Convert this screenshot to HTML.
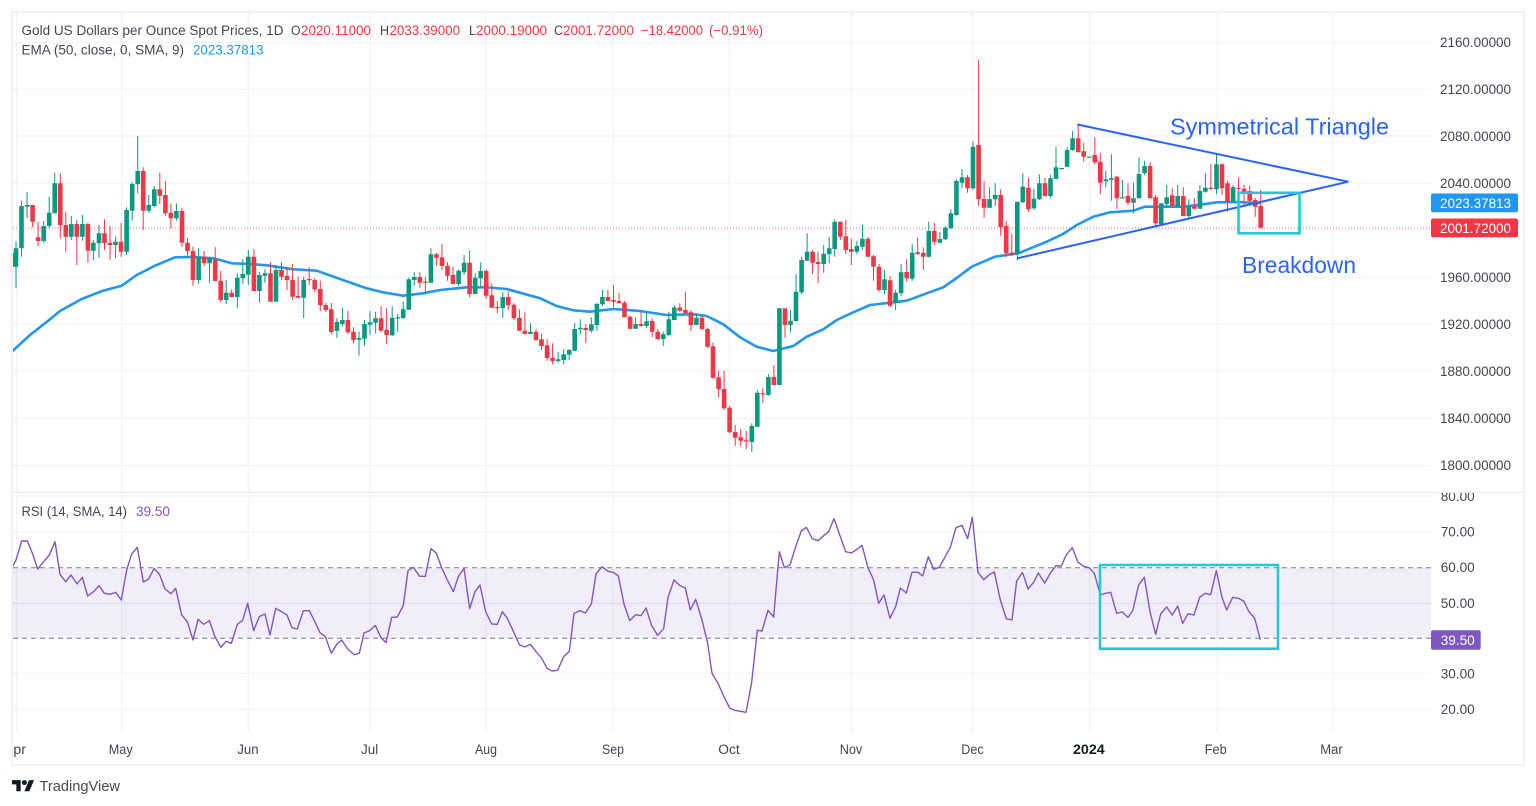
<!DOCTYPE html>
<html lang="en">
<head>
<meta charset="utf-8">
<title>Gold US Dollars per Ounce Spot Prices</title>
<style>
html,body{margin:0;padding:0;background:#fff;width:1536px;height:806px;overflow:hidden}
svg{display:block;font-family:"Liberation Sans",sans-serif}
text{font-size:13.5px;fill:#434651}
</style>
</head>
<body>
<svg width="1536" height="806" viewBox="0 0 1536 806" xmlns="http://www.w3.org/2000/svg">
<defs>
<clipPath id="c1"><rect x="13" y="13" width="1510" height="479"/></clipPath>
<clipPath id="c2"><rect x="13" y="493" width="1510" height="272"/></clipPath>
</defs>
<rect width="1536" height="806" fill="#fff"/>
<path fill="none" stroke="#f1f2f6" stroke-width="1.2" d="M13 42.7H1431M13 89.3H1431M13 136H1431M13 183H1431M13 230H1431M13 277H1431M13 324.3H1431M13 371H1431M13 418.3H1431M13 465.5H1431M13 496H1431M13 531.7H1431M13 603.3H1431M13 673.3H1431M13 709.3H1431M16.7 13V492M121.7 13V492M248.3 13V492M370 13V492M486 13V492M613.3 13V492M729.3 13V492M851.3 13V492M972.7 13V492M1089.7 13V492M1217 13V492M1333.3 13V492M16.7 496V732M121.7 496V732M248.3 496V732M370 496V732M486 496V732M613.3 496V732M729.3 496V732M851.3 496V732M972.7 496V732M1089.7 496V732M1217 496V732M1333.3 496V732"/>
<rect x="12" y="12" width="1512" height="753" fill="none" stroke="#eff1f6" stroke-width="2"/>
<path d="M13 492.3H1524" stroke="#e6e8ef" stroke-width="1.2"/>
<path d="M13 228H1431" stroke="#f23645" stroke-width="1" stroke-dasharray="1 2" opacity=".75"/>
<g clip-path="url(#c1)">
<polyline fill="none" stroke="#2196f3" stroke-width="2.6" stroke-linejoin="round" points="12,351.5 30,335 50,319.3 60,311 81.7,299 103,290.7 121.7,285.7 136.7,275 155,265.7 175,257.3 191.7,257 213.3,258.3 231.7,263.3 250,264 266.7,265.3 293.3,269.3 316.7,270.7 340,279 366.7,288.3 383,292.3 403,295.7 423,293.3 440,290 466.7,287.3 486.7,287.3 506.7,289 540,298.3 556.7,306 573.3,310.3 590,311.7 613.3,309 640,311 666.7,315 693.3,314.3 706.7,316 723.3,324.3 740,337.3 756.7,346.7 773.3,351 793.3,346 806.7,336.7 823.3,329.3 836.7,320 853.3,312.3 870,305 890,302.7 906.7,300.7 926.7,293.3 943.3,287.3 956.7,278 971.7,266.7 995,256.7 1018.3,253.3 1046.7,241.7 1063,234 1076.7,225 1093.3,216.7 1110,212.3 1133.3,210.7 1145,206.7 1183.3,206.7 1203.3,204.3 1216.7,202.3 1236.7,202 1261,203"/>
<path fill="none" stroke="#089981" stroke-width="1" d="M16 241.7V288.3M21.5 200.7V256.7M27.1 192.3V218.3M43.7 221V242.7M49.2 196.7V228.3M54.7 172.7V213.3M71.3 216V240M82.4 215V240.7M93.4 240V260M99 225V257.7M115.6 236.7V258.3M126.6 207.3V255M132.2 182.3V220.7M137.7 136V193.3M148.8 195V212.7M154.3 186V207.3M176.4 203.3V220.7M198.6 248.3V284M209.6 256.7V282.7M226.2 280V304.3M237.3 273.3V308.3M242.8 259.3V284M248.3 250V285M259.4 271.7V302.7M264.9 269.3V282.7M276 265V301.7M303.7 276.7V318.3M336.9 318V338M342.4 308V326M359 331.7V355.7M364.5 320V346M370 311V335M375.6 311.7V333.3M392.2 306.3V336M397.7 314V331.7M403.2 301.7V318.3M408.8 277.7V309.7M414.3 272.3V285.7M430.9 248.3V282.7M458.6 269.3V286M464.1 255V275M475.2 273.3V294M480.7 262.3V286.7M502.8 292.3V317.7M530.5 323.3V334M558.1 351.7V362.7M563.7 349.3V364.3M569.2 349.3V360M574.7 323.3V350.7M580.3 319.3V334M591.3 317.3V332.7M596.9 302.7V330.7M602.4 290V306M635.6 317.3V328.7M646.6 311.7V328.3M663.2 331.7V346M668.8 311.7V336M674.3 305V320M696.4 313.3V325M751.8 423.3V451.7M757.3 390V426.7M768.4 374V395.7M779.4 308.3V385M790.5 310V332.3M796 274V321M801.6 256.7V294M807.1 233.3V260.7M823.7 245V272.7M829.2 237.3V263.3M834.7 219.3V256.7M856.9 240.7V254.3M862.4 225V250M884.5 270V294M895.6 290V310M901.1 264V296M912.2 244V280.7M928.8 221.7V257.3M939.9 231.7V243.3M945.4 226V240M950.9 209.3V229.3M956.4 179.3V215.7M962 169V188.3M973 141V190M989.6 187.3V207.7M995.2 183.3V206M1017.3 201.7V260.7M1022.8 173.3V203.3M1033.9 189.3V210M1039.4 174.3V200M1050.5 175V197.7M1056 146.7V179M1067.1 147.3V167.3M1072.6 130.7V150.7M1105.8 170.7V187.3M1111.4 154.3V200.7M1122.4 180V198.3M1133.5 182.7V213.3M1139 157.3V198.3M1144.6 160.7V175M1161.2 203.3V224M1166.7 185V208.3M1177.7 185V206.7M1188.8 199.3V218.3M1199.9 185V208.7M1205.4 173.3V192.7M1216.5 153.3V194M1233.1 185V201.7"/>
<path fill="none" stroke="#089981" stroke-width="4.6" d="M16 248.3V266.7M21.5 206V248.3M27.1 205V206.7M43.7 226V241M49.2 212.7V226M54.7 183.3V213.3M71.3 224V236.7M82.4 224V236.7M93.4 242.7V250.7M99 233.3V243.3M115.6 241.7V245M126.6 210V251.7M132.2 184V210.7M137.7 171V184.3M148.8 205V210.7M154.3 189.3V206M176.4 211V218.3M198.6 256.7V280M209.6 258.3V263.3M226.2 292.7V300M237.3 277.7V297M242.8 274V278.3M248.3 256.7V274.7M259.4 275V291M264.9 273.3V275.7M276 270V301.7M303.7 280V297.7M336.9 322V331M342.4 320V324M359 338V339.7M364.5 324V338.7M370 322.3V324.7M375.6 318.3V322.7M392.2 317.7V335.3M397.7 317.3V318.5M403.2 309.3V318.3M408.8 279.3V309.7M414.3 277V280M430.9 254.3V282.7M458.6 270.7V284M464.1 262.7V272.3M475.2 277.7V294M480.7 271V278.3M502.8 297V308M530.5 331.7V334M558.1 359.3V361M563.7 354.3V360M569.2 350V354.7M574.7 329V350.7M580.3 327.7V329.3M591.3 324.3V330.7M596.9 304V325M602.4 297V304.3M635.6 324V328.7M646.6 321.3V326M663.2 334.3V339M668.8 319.3V335M674.3 307.5V320M696.4 317.7V325M751.8 426V442M757.3 392.7V426.7M768.4 377V395M779.4 308.3V385M790.5 320.7V325M796 291.7V321M801.6 260V292.3M807.1 251.7V260.7M823.7 253.7V264M829.2 248.3V254.3M834.7 221.7V249M856.9 246V251.7M862.4 238.7V246.7M884.5 279.3V290M895.6 292.7V302.7M901.1 272.3V293.3M912.2 252.7V278.7M928.8 231V256.7M939.9 239V242.7M945.4 227.7V239.3M950.9 213.3V228.3M956.4 181V215M962 177.3V182.7M973 146.7V188.3M989.6 199V207.7M995.2 195V199.3M1017.3 201.7V254M1022.8 186.7V202.3M1033.9 198.7V208.3M1039.4 183.3V199.3M1050.5 178.3V196M1056 167.3V179M1061.6 168V169.2M1067.1 150V166.7M1072.6 138.3V150M1089.2 156.5V157.7M1105.8 179.3V181.3M1111.4 178.3V180M1122.4 197.3V198.5M1133.5 198.3V202.7M1139 174V198.3M1144.6 166V173.3M1161.2 203.3V224M1166.7 197.3V204M1177.7 196V206.7M1188.8 206V216M1199.9 191V208.7M1205.4 187.7V191.7M1216.5 164.3V189.3M1233.1 187.3V201.7"/>
<path fill="none" stroke="#f23645" stroke-width="1" d="M13.5 253V267M32.6 205V227.3M38.1 221.7V246M60.3 173.3V238.3M65.8 211.7V251.7M76.8 220V265M87.9 222.7V262.7M104.5 219.3V250M110 225.7V260M121.1 223V256.7M143.2 167.3V230M159.8 172.7V204M165.4 181V215.7M170.9 203.3V228.3M182 208.3V246.7M187.5 238.3V258.3M193 246.7V285.7M204.1 251V266M215.2 247.3V281M220.7 271V301.7M231.7 289.3V297M253.9 249V291M270.5 262.3V280M281.5 262.3V280M287 266.7V290M292.6 264V300M298.1 276.7V298.3M309.2 267.3V285M314.7 278.3V291.7M320.3 280.7V311M325.8 303V312M331.3 303V334M347.9 311V334M353.5 327.3V343.3M381.1 306V331.7M386.6 308.3V344.3M419.8 272.3V287.7M425.4 276.7V293.3M436.4 252.7V265.7M442 244V270M447.5 262.3V280.7M453 266.7V284M469.6 250.7V297.3M486.2 269.3V299M491.8 283.3V307.7M497.3 301V313.3M508.3 291.7V310M513.9 303.3V320M519.4 309.3V330.7M524.9 312.3V334M536 329V340.7M541.5 334V350M547.1 339.3V360.7M552.6 343.3V364.3M585.8 324V342.7M607.9 290V301M613.5 285V307.3M619 292.7V303.3M624.5 301V317.3M630.1 315.7V329.3M641.1 311.7V326.7M652.2 318.3V337.3M657.7 329V340M679.8 303.3V311.7M685.4 291.7V313.3M690.9 310V330.7M702 315.7V329.3M707.5 327.7V347.7M713 342.7V379M718.6 371V397.3M724.1 371V410M729.6 406V433M735.2 425V446M740.7 429V446M746.2 431V449.3M762.8 388.3V402.7M773.9 365V385M785 308.3V337.7M812.6 250V274M818.1 251.7V283.3M840.3 221.7V240M845.8 220V254M851.3 238.7V265M867.9 237V256.7M873.5 255V280.7M879 264V291.7M890.1 276V307.3M906.7 259.3V281.7M917.7 237.7V255M923.3 247.3V270M934.3 222.7V245M967.5 175V192.7M978.6 60V206M984.1 181V217.7M1000.7 189.3V235.7M1006.2 221V257.3M1011.8 234V255.7M1028.4 177.7V211.7M1045 177.7V196.7M1078.2 124.3V152.3M1083.7 142.7V161.7M1094.8 137.3V164.3M1100.3 152.7V194M1116.9 175.7V209.3M1128 183.3V205M1150.1 162V198.3M1155.6 195V227.3M1172.2 188.3V206.7M1183.3 187.3V216M1194.3 198.3V209.3M1210.9 164V190M1222 163.3V195M1227.5 180.7V211.7M1238.6 177.3V201.7M1244.1 185V205M1249.7 185.7V205M1255.2 197.7V216.7M1260.7 190V228.3"/>
<path fill="none" stroke="#f23645" stroke-width="4.6" d="M32.6 205V221.7M38.1 237.3V241M60.3 183.3V225M65.8 225V236.7M76.8 224V236.7M87.9 224V250.7M104.5 233.3V243M110 242.7V245M121.1 241.7V251.7M143.2 171V210.7M159.8 189.3V195.7M165.4 195V213.3M170.9 212.7V218.3M182 211V242.7M187.5 242.7V251M193 251V280M204.1 256.7V263.3M215.2 259V281M220.7 280.7V300M231.7 292.7V297M253.9 256.7V291M270.5 273.3V301.7M281.5 270V276.7M287 276V280M292.6 280V296.7M298.1 296V297.7M309.2 279V280.2M314.7 280V289.3M320.3 289V305M325.8 305V310M331.3 309.3V332M347.9 320V332.3M353.5 331.7V340M381.1 318.3V330.7M386.6 329.7V335M419.8 277V282.7M425.4 281.5V282.7M436.4 254.3V257.7M442 257.3V266M447.5 265.7V275.7M453 275V284M469.6 262.7V294M486.2 271V295.7M491.8 295.3V307.7M497.3 307V308.2M508.3 297V305.3M513.9 304.7V318.3M519.4 317.7V330.7M524.9 330.7V334M536 331.7V340M541.5 339.3V346M547.1 345.3V358M552.6 357.7V361M585.8 328V330M607.9 297V301M613.5 300V301.7M619 301V303.3M624.5 302.7V317.3M630.1 316.7V328.7M641.1 324V326M652.2 321V331.7M657.7 331.7V339M679.8 307.5V310.7M685.4 310V313.3M690.9 312.3V325M702 317.7V329.3M707.5 329V346.7M713 346.3V377.7M718.6 377.3V389.3M724.1 389V408.3M729.6 407.7V432.3M735.2 432V437.7M740.7 437.3V440.7M746.2 440.3V441.5M762.8 393.3V394.5M773.9 377V385M785 308.3V325M812.6 251.7V262.7M818.1 262V264M840.3 221.7V236.7M845.8 236.3V250M851.3 249V251.7M867.9 238.7V256.7M873.5 256.3V266.7M879 266.7V290M890.1 280.3V305.7M906.7 272V278.3M917.7 252.3V254M923.3 252.7V256.7M934.3 231V241.7M967.5 177.3V188.3M978.6 145V199.3M984.1 199V207.7M1000.7 195V227.3M1006.2 226V253.3M1011.8 252.7V255M1028.4 187.7V209.3M1045 183.3V196M1078.2 138.3V152.3M1083.7 151.3V156.7M1094.8 155V162.3M1100.3 161.7V182.7M1116.9 176.7V198.3M1128 196V202.7M1150.1 166V198.3M1155.6 197.3V223.3M1172.2 195.3V206M1183.3 196V216M1194.3 206V208.7M1210.9 187.7V189M1222 164.3V188.3M1227.5 183.3V201.7M1238.6 187.7V188.9M1244.1 188.7V191.7M1249.7 191V200.7M1255.2 200V206.7M1260.7 206V227.7"/>
<path fill="none" stroke="#2962ff" stroke-width="2" d="M1077.3 124.5L1348.3 181.7L1017.3 258.3"/>
<rect x="1238.5" y="192.8" width="61" height="40.5" fill="none" stroke="#26c6da" stroke-width="2.6"/>
</g>
<rect x="13" y="567.7" width="1418" height="70.6" fill="#7e57c2" fill-opacity=".1"/>
<path d="M13 603.3H1431" stroke="#7e57c2" stroke-opacity=".06" stroke-width="1.2"/>
<path fill="none" stroke="#787b86" stroke-width="1" stroke-dasharray="5 4" d="M13 567.7H1431M13 638.3H1431"/>
<g clip-path="url(#c2)" fill="none" stroke="#7e57c2" stroke-width="4.2" stroke-linejoin="round">
<polyline transform="translate(0,480) scale(.33333)" points="38,258 48,240 65,183 82,183 98,222 113,267 131,245 148,225 165,185 180,283 197,305 213,285 231,312 247,292 263,348 281,335 297,317 313,340 330,343 347,337 364,360 380,270 395,222 412,202 430,306 446,297 462,266 478,282 495,327 513,341 527,325 545,405 562,425 579,480 594,418 611,433 628,422 645,470 663,502 678,484 694,490 712,433 728,421 743,370 761,452 778,410 795,402 810,465 827,385 844,395 861,405 876,443 892,447 910,392 928,392 942,420 960,458 976,470 994,520 1010,493 1025,480 1043,507 1062,524 1078,520 1092,459 1109,452 1126,436 1143,473 1158,488 1175,412 1192,411 1210,376 1224,272 1240,262 1259,289 1276,289 1293,206 1308,218 1325,263 1342,300 1360,335 1375,290 1392,265 1409,386 1425,335 1440,315 1457,395 1475,432 1492,433 1507,395 1522,415 1536,445"/>
<polyline transform="translate(512,480) scale(.33333)" points="0,445 22,494 38,501 55,493 72,515 88,533 105,565 120,573 137,571 155,530 172,514 186,400 204,392 220,399 238,372 252,282 270,260 288,274 304,277 319,288 336,372 353,422 371,404 387,407 402,384 419,437 437,466 455,446 468,352 486,300 503,316 520,324 535,390 551,358 570,420 587,490 600,580 618,610 635,648 653,684 668,691 685,694 702,697 719,607 736,451 750,453 768,391 785,411 802,215 817,263 834,255 851,200 868,153 883,142 901,176 918,182 935,167 950,155 966,116 985,170 1001,215 1018,219 1035,208 1050,196 1068,263 1085,300 1100,370 1116,345 1134,415 1151,380 1165,324 1183,339 1200,277 1218,277 1232,288 1249,230 1265,268 1282,262 1315,202 1332,143 1350,136 1367,176 1381,112 1398,277 1415,299 1432,284 1447,276 1465,360 1483,416 1500,420 1514,303 1531,278 1536,290"/>
<polyline transform="translate(1024,480) scale(.33333)" points="0,290 12,327 29,307 43,279 62,309 80,278 96,257 112,258 127,224 145,203 162,247 178,258 195,263 211,280 229,345 245,340 260,337 278,400 295,396 312,412 326,393 344,315 361,292 378,395 395,463 410,402 428,381 445,405 461,378 476,430 492,401 510,405 527,352 543,340 560,344 577,272 594,352 608,390 626,352 643,355 659,363 675,395 692,415 709,480"/>
</g>
<rect x="1100" y="565" width="178" height="83.7" fill="none" stroke="#26c6da" stroke-width="2.6"/>
<text x="21.5" y="35" textLength="262" lengthAdjust="spacingAndGlyphs">Gold US Dollars per Ounce Spot Prices, 1D</text>
<text x="291" y="35" textLength="9.5" lengthAdjust="spacingAndGlyphs">O</text>
<text x="301" y="35" textLength="70" lengthAdjust="spacingAndGlyphs" style="fill:#f23645">2020.11000</text>
<text x="380" y="35" textLength="9" lengthAdjust="spacingAndGlyphs">H</text>
<text x="389.5" y="35" textLength="70.5" lengthAdjust="spacingAndGlyphs" style="fill:#f23645">2033.39000</text>
<text x="469" y="35" textLength="7" lengthAdjust="spacingAndGlyphs">L</text>
<text x="476" y="35" textLength="71" lengthAdjust="spacingAndGlyphs" style="fill:#f23645">2000.19000</text>
<text x="554" y="35" textLength="9" lengthAdjust="spacingAndGlyphs">C</text>
<text x="563" y="35" textLength="71" lengthAdjust="spacingAndGlyphs" style="fill:#f23645">2001.72000</text>
<text x="641" y="35" textLength="62" lengthAdjust="spacingAndGlyphs" style="fill:#f23645">−18.42000</text>
<text x="709" y="35" textLength="54" lengthAdjust="spacingAndGlyphs" style="fill:#f23645">(−0.91%)</text>
<text x="21.5" y="54.5" textLength="162.5" lengthAdjust="spacingAndGlyphs">EMA (50, close, 0, SMA, 9)</text>
<text x="193" y="54.5" textLength="70.5" lengthAdjust="spacingAndGlyphs" style="fill:#2196f3">2023.37813</text>
<text x="21.5" y="516" textLength="105.5" lengthAdjust="spacingAndGlyphs">RSI (14, SMA, 14)</text>
<text x="136" y="516" textLength="34" lengthAdjust="spacingAndGlyphs" style="fill:#7e57c2">39.50</text>
<text x="1170" y="134.5" textLength="219" lengthAdjust="spacingAndGlyphs" style="font-size:23px;fill:#2962ff">Symmetrical Triangle</text>
<text x="1242" y="273" textLength="114" lengthAdjust="spacingAndGlyphs" style="font-size:23px;fill:#2962ff">Breakdown</text>
<g>
<text x="1440" y="47" textLength="71" lengthAdjust="spacingAndGlyphs">2160.00000</text>
<text x="1440" y="94" textLength="71" lengthAdjust="spacingAndGlyphs">2120.00000</text>
<text x="1440" y="141" textLength="71" lengthAdjust="spacingAndGlyphs">2080.00000</text>
<text x="1440" y="188" textLength="71" lengthAdjust="spacingAndGlyphs">2040.00000</text>
<text x="1440" y="282" textLength="71" lengthAdjust="spacingAndGlyphs">1960.00000</text>
<text x="1440" y="329" textLength="71" lengthAdjust="spacingAndGlyphs">1920.00000</text>
<text x="1440" y="376" textLength="71" lengthAdjust="spacingAndGlyphs">1880.00000</text>
<text x="1440" y="423" textLength="71" lengthAdjust="spacingAndGlyphs">1840.00000</text>
<text x="1440" y="470" textLength="71" lengthAdjust="spacingAndGlyphs">1800.00000</text>
</g>
<rect x="1431" y="193.5" width="87" height="18.8" rx="2" fill="#2196f3"/>
<text x="1440" y="208" textLength="71" lengthAdjust="spacingAndGlyphs" style="fill:#fff">2023.37813</text>
<rect x="1431" y="218.5" width="87" height="18.8" rx="2" fill="#f23645"/>
<text x="1440" y="233" textLength="71" lengthAdjust="spacingAndGlyphs" style="fill:#fff">2001.72000</text>
<g clip-path="url(#c2)">
<text x="1440.7" y="501" textLength="34" lengthAdjust="spacingAndGlyphs">80.00</text>
</g>
<text x="1440.7" y="536.5" textLength="34" lengthAdjust="spacingAndGlyphs">70.00</text>
<text x="1440.7" y="572" textLength="34" lengthAdjust="spacingAndGlyphs">60.00</text>
<text x="1440.7" y="608" textLength="34" lengthAdjust="spacingAndGlyphs">50.00</text>
<text x="1440.7" y="678.5" textLength="34" lengthAdjust="spacingAndGlyphs">30.00</text>
<text x="1440.7" y="714" textLength="34" lengthAdjust="spacingAndGlyphs">20.00</text>
<rect x="1431" y="630.3" width="49.7" height="19.4" rx="2" fill="#7e57c2"/>
<text x="1440.7" y="645" textLength="34" lengthAdjust="spacingAndGlyphs" style="fill:#fff">39.50</text>
<g clip-path="url(#c2)">
<text x="4" y="754" textLength="22" lengthAdjust="spacingAndGlyphs">Apr</text>
</g>
<text x="108.7" y="754" textLength="24" lengthAdjust="spacingAndGlyphs">May</text>
<text x="237.3" y="754" textLength="21.4" lengthAdjust="spacingAndGlyphs">Jun</text>
<text x="361" y="754" textLength="17.3" lengthAdjust="spacingAndGlyphs">Jul</text>
<text x="475" y="754" textLength="22" lengthAdjust="spacingAndGlyphs">Aug</text>
<text x="602" y="754" textLength="22" lengthAdjust="spacingAndGlyphs">Sep</text>
<text x="718.3" y="754" textLength="21.4" lengthAdjust="spacingAndGlyphs">Oct</text>
<text x="839.7" y="754" textLength="22.6" lengthAdjust="spacingAndGlyphs">Nov</text>
<text x="961.3" y="754" textLength="22.4" lengthAdjust="spacingAndGlyphs">Dec</text>
<text x="1073" y="754" textLength="31.7" lengthAdjust="spacingAndGlyphs" style="font-weight:bold;fill:#131722">2024</text>
<text x="1204.7" y="754" textLength="22" lengthAdjust="spacingAndGlyphs">Feb</text>
<text x="1320.3" y="754" textLength="22.4" lengthAdjust="spacingAndGlyphs">Mar</text>
<g transform="translate(12,777.6) scale(.62)" fill="#131722">
<path d="M14 22H7V11H0V4h14v18zM28 22h-8l7.5-18h8L28 22z"/>
<circle cx="20" cy="8" r="4"/>
</g>
<text x="39.5" y="791" textLength="80.5" lengthAdjust="spacingAndGlyphs" style="font-size:15px;fill:#4a4a4a">TradingView</text>
</svg>
</body>
</html>
